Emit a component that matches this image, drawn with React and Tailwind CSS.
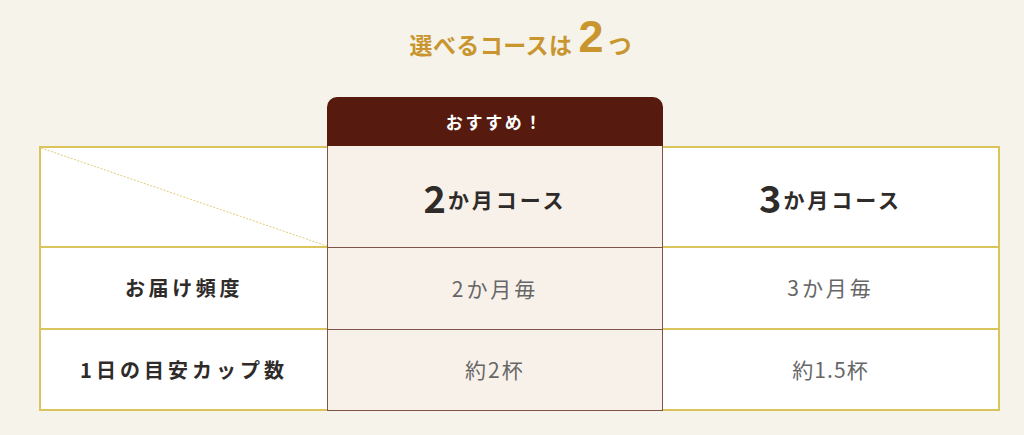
export default function App() {
  const gold = "border-[#dcc45c]";
  const brown = "border-[#7d5649]";
  return (
    <div className="min-h-[435px] w-[1024px] bg-[#f6f3ea] font-['Noto_Sans_CJK_JP','Noto_Sans',sans-serif] pt-[12px]">
      <div className="flex h-[44px] items-end justify-center pl-[17px] text-[#c9952f] font-bold leading-none">
        <span className="text-[23px] tracking-[0.02em]">選べるコースは</span>
        <span className="text-[45px] ml-[6px] translate-y-[3px] font-['Liberation_Sans',Arial,sans-serif]">2</span>
        <span className="text-[23px] ml-[5px]">つ</span>
      </div>
      <div className="pl-[39px] mt-[41px]">
        <div className="grid grid-cols-[288px_336px_337px]">
          <div className="col-start-2 h-[49px] rounded-t-[10px] bg-[#561b0e] flex items-center justify-center text-white font-bold text-[17px] tracking-[0.16em]">
            おすすめ！
          </div>
        </div>
        <div className="grid grid-cols-[288px_336px_337px] grid-rows-[102px_82px_81px]">
          <div className={`relative bg-white border-l-2 border-t-2 border-b-2 ${gold}`}>
            <svg className="absolute inset-0 h-full w-full" preserveAspectRatio="none" viewBox="0 0 286 98">
              <line x1="0" y1="0" x2="286" y2="98" stroke="#e0cc78" strokeWidth="1" strokeDasharray="2 1.5" />
            </svg>
          </div>
          <div className={`bg-[#f8f1ea] border-l border-r border-b ${brown} flex items-center justify-center text-[#2f2b29] font-bold`}>
            <span className="text-[38px] leading-none">2</span>
            <span className="text-[21px] tracking-[0.14em] ml-[2px] mt-[6px]">か月コース</span>
          </div>
          <div className={`bg-white border-t-2 border-r-2 border-b-2 ${gold} flex items-center justify-center text-[#2f2b29] font-bold`}>
            <span className="text-[38px] leading-none">3</span>
            <span className="text-[21px] tracking-[0.14em] ml-[2px] mt-[6px]">か月コース</span>
          </div>

          <div className={`bg-white border-l-2 border-b-2 ${gold} flex items-center justify-center text-[#2f2b29] font-bold text-[20px] tracking-[0.18em]`}>
            お届け頻度
          </div>
          <div className={`bg-[#f8f1ea] border-l border-r border-b ${brown} flex items-center justify-center text-[#666] text-[21px] tracking-[0.14em]`}>
            2か月毎
          </div>
          <div className={`bg-white border-r-2 border-b-2 ${gold} flex items-center justify-center text-[#666] text-[21px] tracking-[0.14em]`}>
            3か月毎
          </div>

          <div className={`bg-white border-l-2 border-b-2 ${gold} flex items-center justify-center text-[#2f2b29] font-bold text-[20px] tracking-[0.2em]`}>
            1日の目安カップ数
          </div>
          <div className={`bg-[#f8f1ea] border-l border-r border-b ${brown} flex items-center justify-center text-[#666] text-[21px] tracking-[0.1em]`}>
            約2杯
          </div>
          <div className={`bg-white border-r-2 border-b-2 ${gold} flex items-center justify-center text-[#666] text-[21px] tracking-[0.05em]`}>
            約1.5杯
          </div>
        </div>
      </div>
    </div>
  );
}
